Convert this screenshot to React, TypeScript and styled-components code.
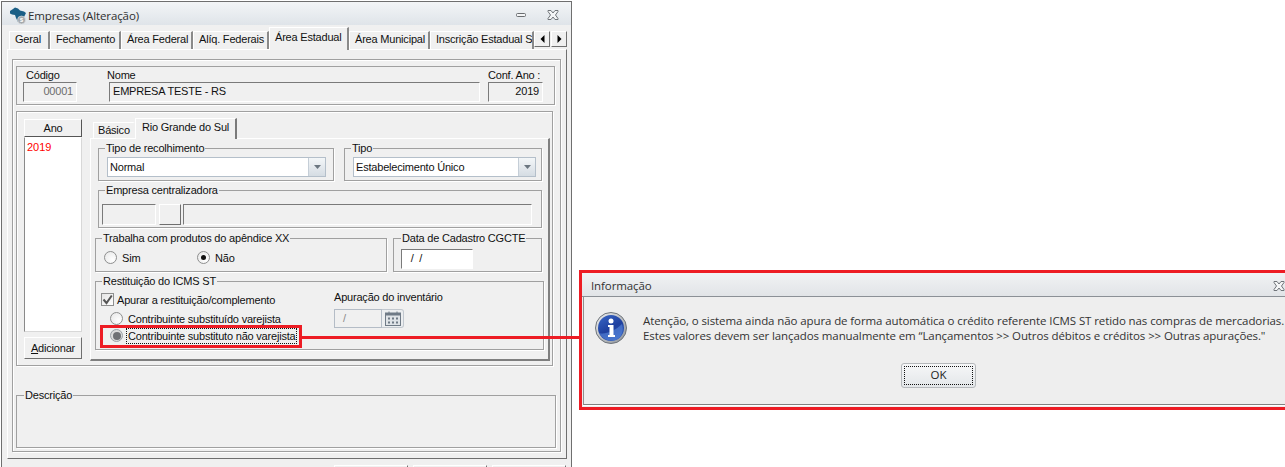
import styled, { createGlobalStyle } from "styled-components";

const RED = "#ed1c24";

const GlobalStyle = createGlobalStyle`
  html, body {
    margin: 0;
    padding: 0;
    background: #fff;
    overflow: hidden;
  }
  * {
    box-sizing: border-box;
  }
`;

const Page = styled.div`
  position: relative;
  display: flex;
  align-items: flex-start;
  width: 1285px;
  height: 467px;
  overflow: hidden;
  font-family: "Liberation Sans", Arial, sans-serif;
  font-size: 11px;
  letter-spacing: -0.2px;
  color: #111;
  background: #fff;
`;

const Window = styled.div`
  flex: none;
  width: 571px;
  height: 480px;
  margin: 1px 0 0 1px;
  border: 1px solid #6f6f6f;
  background: #f0f0f0;
`;

const TitleBar = styled.div`
  display: flex;
  align-items: center;
  gap: 0;
  height: 23px;
  padding: 3px 0 0 6px;
  background: linear-gradient(#f3f5f7, #dfe4e9);
`;

const TitleText = styled.span`
  font-family: "Open Sans", "Noto Sans", sans-serif;
  font-size: 11.5px;
  letter-spacing: -0.1px;
  color: #2f2f2f;
`;

const WindowButtons = styled.div`
  display: flex;
  align-items: center;
  margin-left: auto;
  padding: 0 12px 0 0;
  gap: 21px;
`;

const TabStrip = styled.div`
  position: relative;
  display: flex;
  align-items: flex-end;
  height: 22px;
  margin-top: 2px;
  padding-left: 7px;
`;

const Tab = styled.div<{ $w: number; $active?: boolean }>`
  position: relative;
  z-index: ${(p) => (p.$active ? 2 : 1)};
  flex: none;
  width: ${(p) => p.$w}px;
  height: ${(p) => (p.$active ? 23 : 18)}px;
  margin-bottom: ${(p) => (p.$active ? -1 : 0)}px;
  padding: ${(p) => (p.$active ? 3 : 1)}px 0 0 5px;
  overflow: hidden;
  white-space: nowrap;
  background: #f0f0f0;
  border-left: 1px solid #fff;
  border-top: 1px solid #fff;
  border-right: 2px solid #8a8a8a;
`;

const ScrollButtons = styled.div`
  position: absolute;
  top: 4px;
  left: 532px;
  z-index: 3;
  display: flex;
  gap: 1px;
`;

const ScrollButton = styled.div`
  display: flex;
  align-items: center;
  justify-content: center;
  width: 16px;
  height: 16px;
  background: #f0f0f0;
  border: 1px solid;
  border-color: #fff #6f6f6f #6f6f6f #fff;
`;

const TabPage = styled.div`
  height: 410px;
  margin: 0 4px 0 5px;
  padding: 9px 5px 0 4px;
  border: 1px solid;
  border-color: #fff #6f6f6f #6f6f6f #fff;
`;

const BevelPanel = styled.div`
  display: flex;
  flex-direction: column;
  align-items: flex-start;
  height: 393px;
  padding: 6px 0 0 3px;
  border: 1px solid #a0a0a0;
  box-shadow: 1px 1px 0 #fff, inset 1px 1px 0 #fff;
`;

const HeaderGroup = styled.div`
  display: flex;
  width: 539px;
  height: 39px;
  padding: 1px 0 0 6px;
  border: 1px solid #a0a0a0;
  box-shadow: 1px 1px 0 #fff;
`;

const FieldColumn = styled.div<{ $w: number; $ml?: number }>`
  display: flex;
  flex-direction: column;
  width: ${(p) => p.$w}px;
  margin-left: ${(p) => p.$ml ?? 0}px;
`;

const FieldLabel = styled.span<{ $indent?: number }>`
  height: 14px;
  line-height: 14px;
  padding-left: ${(p) => p.$indent ?? 0}px;
  white-space: nowrap;
`;

const SunkenField = styled.div<{
  $w?: number;
  $h?: number;
  $ml?: number;
  $white?: boolean;
  $right?: boolean;
  $muted?: boolean;
}>`
  width: ${(p) => (p.$w ? `${p.$w}px` : "auto")};
  height: ${(p) => p.$h ?? 20}px;
  margin-left: ${(p) => p.$ml ?? 0}px;
  padding: 0 3px;
  line-height: ${(p) => (p.$h ?? 20) - 3}px;
  text-align: ${(p) => (p.$right ? "right" : "left")};
  white-space: pre;
  color: ${(p) => (p.$muted ? "#6d6d6d" : "#111")};
  background: ${(p) => (p.$white ? "#fff" : "#f0f0f0")};
  border: 1px solid;
  border-color: #7a7a7a #fff #fff #7a7a7a;
`;

const MainGroup = styled.div`
  display: flex;
  gap: 8px;
  width: 537px;
  height: 255px;
  margin-top: 6px;
  padding: 7px 0 0 7px;
  border: 1px solid #a0a0a0;
  box-shadow: 1px 1px 0 #fff, inset 1px 1px 0 #fff;
`;

const YearColumn = styled.div`
  display: flex;
  flex-direction: column;
  width: 58px;
`;

const YearHeader = styled.div`
  height: 18px;
  line-height: 16px;
  text-align: center;
  background: #f0f0f0;
  border: 1px solid;
  border-color: #fff #555 #555 #fff;
`;

const YearList = styled.div`
  height: 195px;
  padding: 2px 2px;
  line-height: 15px;
  letter-spacing: 0;
  color: #f00;
  background: #fff;
  border: 1px solid;
  border-color: #fff #d8d8d8 #d8d8d8 #8a8a8a;
`;

const RaisedButton = styled.div`
  height: 22px;
  margin-top: 5px;
  line-height: 20px;
  text-align: center;
  background: #f0f0f0;
  border: 1px solid;
  border-color: #fff #6f6f6f #6f6f6f #fff;
`;

const Underlined = styled.span`
  text-decoration: underline;
`;

const InnerTabs = styled.div`
  display: flex;
  flex-direction: column;
  width: 460px;
`;

const InnerTabStrip = styled.div`
  display: flex;
  align-items: flex-end;
  height: 19px;
  padding-left: 3px;
`;

const InnerTab = styled.div<{ $w: number; $active?: boolean }>`
  position: relative;
  z-index: ${(p) => (p.$active ? 2 : 1)};
  flex: none;
  width: ${(p) => p.$w}px;
  height: ${(p) => (p.$active ? 21 : 16)}px;
  margin-bottom: ${(p) => (p.$active ? -1 : 0)}px;
  padding: ${(p) => (p.$active ? 2 : 1)}px 0 0 ${(p) => (p.$active ? 6 : 4)}px;
  white-space: nowrap;
  background: #f0f0f0;
  border-left: 1px solid #fff;
  border-top: 1px solid #fff;
  border-right: 2px solid ${(p) => (p.$active ? "#7a7a7a" : "transparent")};
`;

const InnerPage = styled.div`
  display: flex;
  flex-direction: column;
  height: 223px;
  padding: 9px 0 0 4px;
  border-left: 1px solid #fff;
  border-top: 1px solid #fff;
  border-right: 2px solid #7f7f7f;
  border-bottom: 2px solid #7f7f7f;
`;

const GroupRow = styled.div<{ $mt?: number; $ml?: number; $gap: number }>`
  display: flex;
  gap: ${(p) => p.$gap}px;
  margin-top: ${(p) => p.$mt ?? 0}px;
  margin-left: ${(p) => p.$ml ?? 0}px;
`;

const GroupBox = styled.div<{ $w: number; $h: number }>`
  position: relative;
  flex: none;
  width: ${(p) => p.$w}px;
  height: ${(p) => p.$h}px;
  border: 1px solid #a0a0a0;
  box-shadow: 1px 1px 0 #fff;
`;

const Legend = styled.span<{ $left?: number }>`
  position: absolute;
  top: -8px;
  left: ${(p) => p.$left ?? 6}px;
  padding: 0 1px;
  height: 14px;
  line-height: 14px;
  white-space: nowrap;
  background: #f0f0f0;
`;

const Combo = styled.div<{ $w: number }>`
  display: flex;
  width: ${(p) => p.$w}px;
  height: 20px;
  margin: 8px 0 0 8px;
  background: #fff;
  border: 1px solid #b4bfca;
`;

const ComboText = styled.span`
  flex: 1;
  padding-left: 2px;
  line-height: 19px;
`;

const ComboButton = styled.div`
  display: flex;
  align-items: center;
  justify-content: center;
  width: 17px;
  border-left: 1px solid #c5ced7;
  background: linear-gradient(#f3f6f8, #d5dce3);
`;

const EmpresaRow = styled.div`
  display: flex;
  gap: 2px;
  padding: 13px 0 0 3px;
`;

const SquareButton = styled.div`
  width: 22px;
  height: 21px;
  margin-left: 1px;
  background: #f0f0f0;
  border: 1px solid;
  border-color: #fff #6f6f6f #6f6f6f #fff;
`;

const RadioLine = styled.div<{ $mt?: number; $ml?: number; $w?: number }>`
  display: flex;
  align-items: center;
  flex: none;
  gap: 5px;
  width: ${(p) => (p.$w ? `${p.$w}px` : "auto")};
  height: 15px;
  margin-top: ${(p) => p.$mt ?? 0}px;
  margin-left: ${(p) => p.$ml ?? 0}px;
  white-space: nowrap;
`;

const RadioCircle = styled.span<{ $on?: boolean; $focus?: boolean }>`
  position: relative;
  flex: none;
  width: 13px;
  height: 13px;
  border-radius: 50%;
  border: 1px solid ${(p) => (p.$focus ? "#9aa0a6" : "#8e8f8f")};
  background: ${(p) => (p.$focus ? "#dcdcdc" : "radial-gradient(circle at 70% 70%, #fff, #e6e6e6)")};

  &::after {
    content: "";
    position: absolute;
    display: ${(p) => (p.$on || p.$focus ? "block" : "none")};
    top: ${(p) => (p.$focus ? 1.5 : 3)}px;
    left: ${(p) => (p.$focus ? 1.5 : 3)}px;
    width: ${(p) => (p.$focus ? 8 : 5)}px;
    height: ${(p) => (p.$focus ? 8 : 5)}px;
    border-radius: 50%;
    background: ${(p) => (p.$focus ? "#6f7175" : "#111")};
  }
`;

const FocusLabel = styled.span`
  padding: 0 1px;
  margin-left: -1px;
  line-height: 14px;
  outline: 1px dotted #111;
`;

const RestituicaoBody = styled.div`
  display: flex;
`;

const RestituicaoLeft = styled.div`
  display: flex;
  flex-direction: column;
  width: 238px;
  padding: 10px 0 0 5px;
`;

const RestituicaoRight = styled.div`
  display: flex;
  flex-direction: column;
  padding-top: 8px;
`;

const CheckBox = styled.span`
  display: flex;
  align-items: center;
  justify-content: center;
  flex: none;
  width: 13px;
  height: 13px;
  background: linear-gradient(135deg, #e4e4e4, #fff);
  border: 1px solid #8e8f8f;
`;

const CheckLine = styled.div`
  display: flex;
  align-items: center;
  gap: 3px;
  height: 15px;
`;

const DateRow = styled.div`
  display: flex;
  margin-top: 5px;
`;

const DisabledDate = styled.div`
  width: 48px;
  height: 19px;
  padding-left: 8px;
  line-height: 17px;
  color: #8a8a8a;
  border: 1px solid #b4bcc6;
`;

const CalendarButton = styled.div`
  display: flex;
  align-items: center;
  justify-content: center;
  width: 22px;
  height: 19px;
  border: 1px solid #c2c8cf;
  border-left: none;
  border-radius: 0 3px 3px 0;
  background: #eceef0;
`;

const DescricaoGroup = styled.div`
  position: relative;
  width: 540px;
  height: 53px;
  margin-top: 29px;
  border: 1px solid #a0a0a0;
  box-shadow: 1px 1px 0 #fff;
`;

const BottomButtons = styled.div`
  display: flex;
  justify-content: flex-end;
  gap: 5px;
  margin: 6px 5px 0 0;
`;

const BottomButton = styled.div`
  width: 74px;
  height: 22px;
  background: #f0f0f0;
  border: 1px solid;
  border-color: #fff #6f6f6f #6f6f6f #fff;
`;

const Dialog = styled.div`
  flex: none;
  width: 706px;
  height: 140px;
  margin: 270px 0 0 7px;
  border: 3px solid ${RED};
  border-right: none;
  background: #eeeeee;
  font-family: "Open Sans", "Noto Sans", sans-serif;
  font-size: 11.5px;
  letter-spacing: -0.1px;
  color: #333;
`;

const DialogTitle = styled.div`
  display: flex;
  align-items: center;
  justify-content: space-between;
  height: 24px;
  padding: 2px 0 0 9px;
  border-bottom: 1px solid #8b9096;
  background: linear-gradient(#f1f2f4, #e1e4e7);
`;

const DialogBody = styled.div`
  display: flex;
  flex-direction: column;
  height: 108px;
  margin-left: 1px;
  border-left: 1px solid #8f8f8f;
  border-bottom: 1px solid #808080;
  box-shadow: 0 1px 0 #fff;
`;

const MessageRow = styled.div`
  display: flex;
  gap: 16px;
  padding: 15px 0 0 11px;
`;

const IconSlot = styled.div`
  flex: none;
  width: 32px;
  height: 32px;
`;

const MessageText = styled.div`
  line-height: 15px;
  padding-top: 1px;
  white-space: nowrap;
`;

const OkButton = styled.div`
  align-self: flex-start;
  width: 75px;
  height: 25px;
  margin: 19px 0 0 317px;
  padding: 3px;
  border: 1px solid #b5b8bb;
  border-radius: 3px;
  background: linear-gradient(#f6f7f8, #e3e6e9);
  color: #222;
  text-align: center;
`;

const OkFocus = styled.div`
  height: 100%;
  line-height: 15px;
  outline: 1px dotted #111;
`;

const RedBox = styled.div`
  position: absolute;
  left: 100px;
  top: 325px;
  width: 202px;
  height: 23px;
  border: 3px solid ${RED};
`;

const RedLine = styled.div`
  position: absolute;
  left: 302px;
  top: 336px;
  width: 278px;
  height: 3px;
  background: ${RED};
`;

const BrazilIcon = () => (
  <svg width="20" height="19" viewBox="0 0 20 19">
    <path d="M2 5 L5 3 L7 1.500 L10 2.500 L12 4.500 L16 5.500 L18 7 L16 11 L13 12 L12 15 L10 16 L8 12 L7 9 L4 8.500 L2 7.500 Z" fill="#1b5f86" />
    <circle cx="13.500" cy="14" r="4" fill="#a4a9ad" stroke="#e4e6e8" strokeWidth="0.6" />
    <text x="13.500" y="16.200" fontSize="6.500" fontFamily="Liberation Sans" fontWeight="700" textAnchor="middle" fill="#fff">s</text>
  </svg>
);

const MinimizeIcon = () => (
  <svg width="10" height="4" viewBox="0 0 10 4">
    <rect x="0.5" y="0.5" width="9" height="3" rx="1" fill="#f4f5f6" stroke="#6a6d70" />
  </svg>
);

const CloseIcon = () => (
  <svg width="12" height="10" viewBox="0 0 12 10">
    <path d="M1 .5h3L6 3l2-2.500h3v1L8.500 5 11 8.500v1H8L6 7 4 9.500H1v-1L3.500 5 1 1.500z" fill="#f4f5f6" stroke="#70757a" />
  </svg>
);

const ArrowIcon = ({ dir }: { dir: "left" | "right" }) => (
  <svg width="5" height="8" viewBox="0 0 5 8">
    <path d={dir === "left" ? "M4.500 0v8L.5 4z" : "M.5 0v8L4.500 4z"} fill="#000" />
  </svg>
);

const ComboArrow = () => (
  <svg width="7" height="4" viewBox="0 0 7 4">
    <path d="M0 0h7L3.500 4z" fill="#6b7680" />
  </svg>
);

const CheckIcon = () => (
  <svg width="11" height="11" viewBox="0 0 11 11">
    <path d="M1.500 5.500 4.500 9 9.800 1.500" fill="none" stroke="#555" strokeWidth="2" />
  </svg>
);

const CalendarIcon = () => (
  <svg width="16" height="15" viewBox="0 0 16 15">
    <rect x="0.5" y="2" width="15" height="12.500" fill="#dfe3e7" stroke="#6f7a86" />
    <rect x="1" y="2" width="14" height="2.500" fill="#6f7a86" />
    <path d="M4 .5v3M12 .5v3" stroke="#6f7a86" />
    <path d="M3 6.500h2v2H3zM7 6.500h2v2H7zM11 6.500h2v2h-2zM3 10.500h2v2H3zM7 10.500h2v2H7zM11 10.500h2v2h-2z" fill="#6f7a86" />
  </svg>
);

const InfoIcon = () => (
  <svg width="32" height="32" viewBox="0 0 32 32">
    <defs>
      <linearGradient id="infoRing" x1="0" y1="0" x2="1" y2="1">
        <stop offset="0" stopColor="#f0f1f3" />
        <stop offset="1" stopColor="#8a9096" />
      </linearGradient>
      <linearGradient id="infoFill" x1="0" y1="0" x2="0.6" y2="1">
        <stop offset="0" stopColor="#3a68c8" />
        <stop offset="0.6" stopColor="#1e3f9e" />
        <stop offset="1" stopColor="#2f5ab8" />
      </linearGradient>
    </defs>
    <circle cx="16" cy="16" r="15.500" fill="url(#infoRing)" stroke="#6f747a" />
    <circle cx="16" cy="16" r="13" fill="url(#infoFill)" />
    <path d="M4 21c6 2 16-2 23-9 2 6 0 11-3 14-5 4-15 4-20-5z" fill="#5f8ee0" opacity="0.55" />
    <circle cx="16" cy="9" r="2.500" fill="#fff" />
    <path d="M13 13h5.500v10H20v2h-7v-2h1.500v-8H13z" fill="#fff" />
  </svg>
);

export default function App() {
  return (
    <>
      <GlobalStyle />
      <Page>
        <Window>
          <TitleBar>
            <BrazilIcon />
            <TitleText>Empresas (Alteração)</TitleText>
            <WindowButtons>
              <MinimizeIcon />
              <CloseIcon />
            </WindowButtons>
          </TitleBar>
          <TabStrip>
            <Tab $w={41}>Geral</Tab>
            <Tab $w={71}>Fechamento</Tab>
            <Tab $w={72}>Área Federal</Tab>
            <Tab $w={76}>Alíq. Federais</Tab>
            <Tab $w={80} $active>Área Estadual</Tab>
            <Tab $w={81}>Área Municipal</Tab>
            <Tab $w={104}>Inscrição Estadual S</Tab>
            <ScrollButtons>
              <ScrollButton><ArrowIcon dir="left" /></ScrollButton>
              <ScrollButton><ArrowIcon dir="right" /></ScrollButton>
            </ScrollButtons>
          </TabStrip>
          <TabPage>
            <BevelPanel>
              <HeaderGroup>
                <FieldColumn $w={54}>
                  <FieldLabel $indent={3}>Código</FieldLabel>
                  <SunkenField $right $muted>00001</SunkenField>
                </FieldColumn>
                <FieldColumn $w={373} $ml={30}>
                  <FieldLabel>Nome</FieldLabel>
                  <SunkenField $ml={2}>EMPRESA TESTE - RS</SunkenField>
                </FieldColumn>
                <FieldColumn $w={55} $ml={8}>
                  <FieldLabel>Conf. Ano :</FieldLabel>
                  <SunkenField $right>2019</SunkenField>
                </FieldColumn>
              </HeaderGroup>

              <MainGroup>
                <YearColumn>
                  <YearHeader>Ano</YearHeader>
                  <YearList>2019</YearList>
                  <RaisedButton><Underlined>A</Underlined>dicionar</RaisedButton>
                </YearColumn>
                <InnerTabs>
                  <InnerTabStrip>
                    <InnerTab $w={42}>Básico</InnerTab>
                    <InnerTab $w={102} $active>Rio Grande do Sul</InnerTab>
                  </InnerTabStrip>
                  <InnerPage>
                    <GroupRow $ml={3} $gap={10}>
                      <GroupBox $w={236} $h={33}>
                        <Legend>Tipo de recolhimento</Legend>
                        <Combo $w={219}>
                          <ComboText>Normal</ComboText>
                          <ComboButton><ComboArrow /></ComboButton>
                        </Combo>
                      </GroupBox>
                      <GroupBox $w={198} $h={33}>
                        <Legend>Tipo</Legend>
                        <Combo $w={183}>
                          <ComboText>Estabelecimento Único</ComboText>
                          <ComboButton><ComboArrow /></ComboButton>
                        </Combo>
                      </GroupBox>
                    </GroupRow>
                    <GroupRow $mt={9} $ml={3} $gap={0}>
                      <GroupBox $w={444} $h={38}>
                        <Legend>Empresa centralizadora</Legend>
                        <EmpresaRow>
                          <SunkenField $w={54} $h={21} />
                          <SquareButton />
                          <SunkenField $w={349} $h={21} />
                        </EmpresaRow>
                      </GroupBox>
                    </GroupRow>
                    <GroupRow $mt={10} $gap={6}>
                      <GroupBox $w={292} $h={34}>
                        <Legend>Trabalha com produtos do apêndice XX</Legend>
                        <GroupRow $gap={0}>
                          <RadioLine $mt={11} $ml={8} $w={93}>
                            <RadioCircle />Sim
                          </RadioLine>
                          <RadioLine $mt={11}>
                            <RadioCircle $on />Não
                          </RadioLine>
                        </GroupRow>
                      </GroupBox>
                      <GroupBox $w={149} $h={34}>
                        <Legend $left={7}>Data de Cadastro CGCTE</Legend>
                        <GroupRow $mt={10} $ml={7} $gap={0}>
                          <SunkenField $w={72} $white>{"  /  /"}</SunkenField>
                        </GroupRow>
                      </GroupBox>
                    </GroupRow>
                    <GroupRow $mt={9} $gap={0}>
                      <GroupBox $w={449} $h={69}>
                        <Legend>Restituição do ICMS ST</Legend>
                        <RestituicaoBody>
                          <RestituicaoLeft>
                            <CheckLine>
                              <CheckBox><CheckIcon /></CheckBox>
                              Apurar a restituição/complemento
                            </CheckLine>
                            <RadioLine $mt={4} $ml={9}>
                              <RadioCircle />Contribuinte substituído varejista
                            </RadioLine>
                            <RadioLine $mt={2} $ml={9}>
                              <RadioCircle $focus />
                              <FocusLabel>Contribuinte substituto não varejista</FocusLabel>
                            </RadioLine>
                          </RestituicaoLeft>
                          <RestituicaoRight>
                            <FieldLabel>Apuração do inventário</FieldLabel>
                            <DateRow>
                              <DisabledDate>/</DisabledDate>
                              <CalendarButton><CalendarIcon /></CalendarButton>
                            </DateRow>
                          </RestituicaoRight>
                        </RestituicaoBody>
                      </GroupBox>
                    </GroupRow>
                  </InnerPage>
                </InnerTabs>
              </MainGroup>

              <DescricaoGroup>
                <Legend $left={7}>Descrição</Legend>
              </DescricaoGroup>
            </BevelPanel>
          </TabPage>
          <BottomButtons>
            <BottomButton />
            <BottomButton />
            <BottomButton />
          </BottomButtons>
        </Window>

        <Dialog>
          <DialogTitle>
            <span>Informação</span>
            <CloseIcon />
          </DialogTitle>
          <DialogBody>
            <MessageRow>
              <IconSlot><InfoIcon /></IconSlot>
              <MessageText>
                Atenção, o sistema ainda não apura de forma automática o crédito referente ICMS ST retido nas compras de mercadorias.
                <br />
                Estes valores devem ser lançados manualmente em “Lançamentos {">>"} Outros débitos e créditos {">>"} Outras apurações."
              </MessageText>
            </MessageRow>
            <OkButton><OkFocus>OK</OkFocus></OkButton>
          </DialogBody>
        </Dialog>

        <RedBox />
        <RedLine />
      </Page>
    </>
  );
}
